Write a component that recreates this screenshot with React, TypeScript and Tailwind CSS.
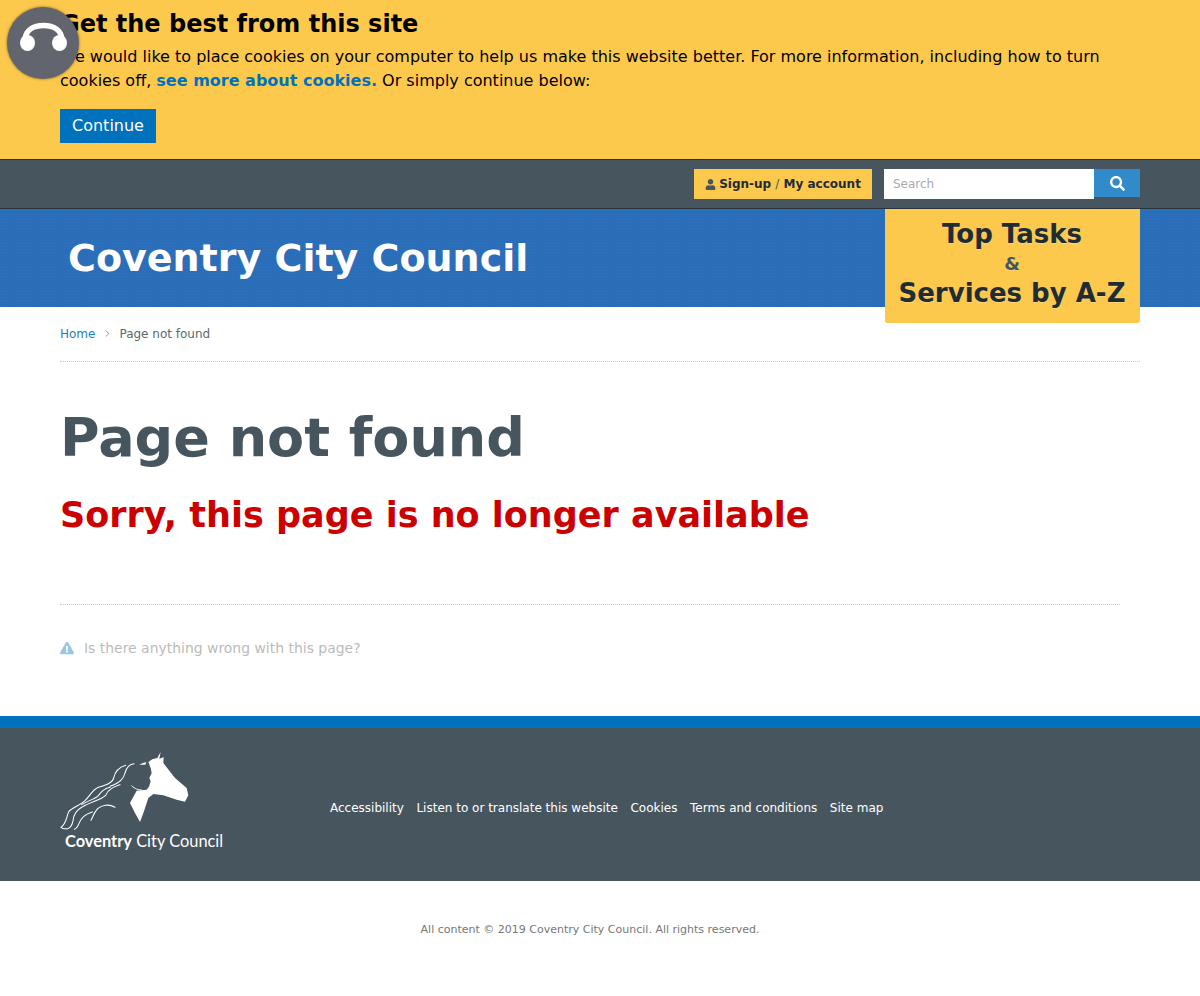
import { ChevronRight } from "lucide-react";
import { FaExclamationTriangle, FaSearch, FaUser } from "react-icons/fa";

const footerLinks = [
  "Accessibility",
  "Listen to or translate this website",
  "Cookies",
  "Terms and conditions",
  "Site map",
];

function HorseLogo() {
  return (
    <svg width="165" height="85" viewBox="60 748 165 85" fill="none" className="block">
      {/* head and neck, traced at 3x from (120,748) */}
      <g transform="translate(120 748) scale(0.3333)" fill="#fff">
        <path d="M122 12 L112 30 L97 34 L85 42 L92 60 L95 75 L88 90 L92 100 L87 116 L80 125 L50 128 L38 150 L30 165 L45 195 L60 222 L72 190 L85 150 L100 138 L130 142 L170 155 L195 161 L205 142 L200 120 L165 90 L130 45 L131 28 L118 32 Z" />
        <path d="M58 50 L70 44 L79 43 L76 50 Z" />
      </g>
      {/* mane strands, traced at 3x from (55,748) */}
      <g
        transform="translate(55 748) scale(0.3333)"
        stroke="#fff"
        strokeWidth="3.2"
        strokeLinecap="round"
      >
        <path d="M237 47 C222 48 214 60 210 75 C206 92 196 103 165 115" />
        <path d="M212 52 C192 58 180 72 176 90 C172 106 150 112 130 118 C112 126 106 142 90 158 C76 172 52 178 42 190 C34 204 36 224 18 238 C22 242 28 243 34 242" />
        <path d="M195 110 C178 116 160 122 152 142 C138 156 105 162 80 178 C62 188 56 200 54 218 C52 232 46 240 36 243" />
        <path d="M165 118 C145 122 136 134 128 145 C116 154 96 160 80 170" />
        <path d="M180 178 C160 166 140 172 128 182 C118 192 114 206 108 217" />
        <path d="M112 192 C92 198 78 210 72 226 C68 236 64 242 58 244" />
      </g>
      <path d="M131.5 785.5 C135 789 138 790 142 790" stroke="#fff" strokeWidth="1" />
    </svg>
  );
}

export default function App() {
  return (
    <div className="relative min-h-[996px] bg-white font-['DejaVu_Sans',sans-serif] text-[#47555f]">
      <button className="absolute left-[7px] top-[7px] h-[72px] w-[72px] rounded-full bg-[#62656e] shadow-[0_0_3px_rgba(0,0,0,0.5)]">
        <svg width="72" height="72" viewBox="0 0 72 72" fill="none">
          <path d="M18 32 C19 23 26 18.5 36.5 18.5 C47 18.5 54 23 55 32" stroke="#fff" strokeWidth="5.5" />
          <ellipse cx="20.5" cy="36" rx="7.5" ry="8" fill="#fff" />
          <ellipse cx="52.5" cy="36" rx="7.5" ry="8" fill="#fff" />
        </svg>
      </button>

      <div className="h-[159px] bg-[#fdc94d] px-[60px] pt-[8px] text-black">
        <h2 className="text-[24px] font-bold leading-[32px]">Get the best from this site</h2>
        <p className="mt-[5px] max-w-[1080px] text-[16px] leading-[24px]">
          We would like to place cookies on your computer to help us make this website better. For more information,
          including how to turn cookies off,{" "}
          <a className="font-bold text-[#0071bc]">see more about cookies.</a> Or simply continue below:
        </p>
        <button className="mt-[16px] h-[34px] bg-[#0071bc] px-[12px] text-[16px] text-white">Continue</button>
      </div>

      <div className="flex h-[50px] items-center justify-end border-y border-[#2b333a] bg-[#47555f] pr-[60px]">
        <a className="flex h-[30px] w-[178px] items-center justify-center gap-[3px] bg-[#fdc94d] text-[12px] font-bold text-[#212b32] [text-shadow:0_1px_0_rgba(255,255,255,0.15)]">
          <FaUser size={11} className="text-[#47555f]" />
          <span>
            Sign-up <span className="font-normal text-[#47555f]">/</span> My account
          </span>
        </a>
        <div className="ml-[12px] flex items-start">
          <input
            placeholder="Search"
            className="h-[30px] w-[210px] bg-white px-[9px] text-[12px] outline-none placeholder:text-[#aaaaaa]"
          />
          <div className="flex h-[28px] w-[46px] items-center justify-center bg-[#318bca]">
            <FaSearch size={15} className="text-white" />
          </div>
        </div>
      </div>

      <header className="flex h-[98px] items-start justify-between bg-[#2a6db9] bg-[radial-gradient(rgba(255,255,255,0.03)_1px,transparent_1px)] bg-[length:3px_3px] pr-[60px]">
        <h1 className="ml-[68px] mt-[26px] text-[38px] font-bold leading-[46px] text-white">Coventry City Council</h1>
        <div className="relative flex h-[114px] w-[255px] flex-col items-center rounded-b-[2px] bg-[#fdc94d] pr-[1px] pt-[8px] font-bold text-[#212b32] [text-shadow:0_1px_0_rgba(255,255,255,0.25)]">
          <span className="text-[26px] leading-[34px]">Top Tasks</span>
          <span className="text-[18px] leading-[25px] text-[#47555f]">&amp;</span>
          <span className="text-[26px] leading-[34px]">Services by A-Z</span>
        </div>
      </header>

      <main className="px-[60px]">
        <nav className="flex h-[55px] items-center border-b border-dotted border-[#cccccc] pb-[1px] text-[12px]">
          <a className="text-[#1a7fc1]">Home</a>
          <ChevronRight size={11} strokeWidth={1.5} className="mx-[6.5px] text-[#5b6871]" />
          <span className="text-[#5b6871]">Page not found</span>
        </nav>
        <h1 className="mt-[42px] text-[54px] font-bold leading-[68px]">Page not found</h1>
        <h2 className="mt-[21px] text-[35px] font-bold leading-[44px] text-[#cc0000]">
          Sorry, this page is no longer available
        </h2>
        <div className="mt-[67px] mr-[20px] border-t border-dotted border-[#cccccc]" />
        <div className="mt-[33px] flex items-center gap-[10px] text-[13.95px] leading-[20px] text-[#bbbbbb]">
          <FaExclamationTriangle size={14} className="text-[#99c6e4]" />
          <span>Is there anything wrong with this page?</span>
        </div>
      </main>

      <footer className="mt-[58px]">
        <div className="flex h-[165px] items-start border-t-[12px] border-[#0071bc] bg-[#47555f] px-[60px] pt-[20px]">
          <div className="w-[270px]">
            <HorseLogo />
            <div className="ml-[5px] mt-[-3px] font-['Lato',sans-serif] text-[16.4px] leading-[22px] text-white">
              <span className="font-bold">Coventry</span> City Council
            </div>
          </div>
          <ul className="mt-[51px] flex gap-[12.6px] text-[12px] leading-[18px] text-white">
            {footerLinks.map((link) => (
              <li key={link}>{link}</li>
            ))}
          </ul>
        </div>
        <p className="mt-[41px] pr-[20px] text-center text-[11px] leading-[16px] text-[#777777]">
          All content © 2019 Coventry City Council. All rights reserved.
        </p>
      </footer>
    </div>
  );
}
